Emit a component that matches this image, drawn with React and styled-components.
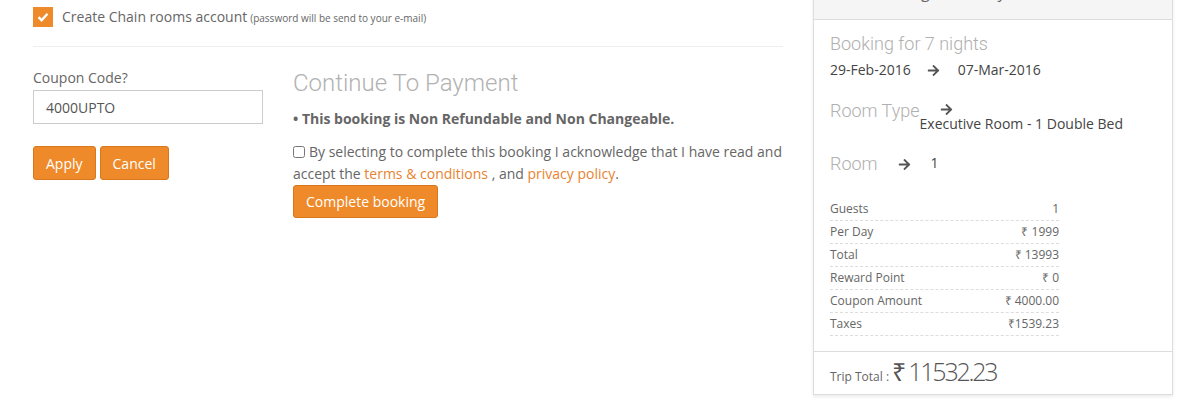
import React from 'react';
import styled, { createGlobalStyle } from 'styled-components';
import { FaArrowRight } from 'react-icons/fa';

const GlobalStyle = createGlobalStyle`
  body {
    margin: 0;
    font-family: "Open Sans", "Liberation Sans", sans-serif;
    color: #666;
    background: #fff;
    overflow: hidden;
  }
`;

const orange = '#ef8a2a';
const lightFont = '"Roboto Light", Roboto, "Liberation Sans", sans-serif';

const Page = styled.div`
  display: flex;
  align-items: flex-start;
  width: 1186px;
  height: 410px;
`;

const Main = styled.div`
  width: 750px;
  margin-left: 33px;
`;

const AccountRow = styled.label`
  display: flex;
  align-items: center;
  height: 20px;
  margin-top: 7px;
  font-size: 14px;
  line-height: 18px;
  color: #666;
`;

const OrangeBox = styled.span`
  display: inline-flex;
  align-items: center;
  justify-content: center;
  width: 20px;
  height: 20px;
  background: ${orange};
  margin-right: 9px;
`;

const Hint = styled.small`
  font-size: 10px;
  margin-left: 3px;
  margin-top: 2px;
`;

const Divider = styled.hr`
  border: 0;
  border-top: 1px solid #eee;
  margin: 19px 0 0;
`;

const FormRow = styled.div`
  display: flex;
  gap: 30px;
  margin-top: 20px;
`;

const CouponCol = styled.div`
  width: 230px;
`;

const FieldLabel = styled.div`
  font-size: 14px;
  line-height: 20px;
  margin-top: 1px;
  color: #666;
`;

const Input = styled.input`
  display: block;
  box-sizing: border-box;
  width: 230px;
  height: 34px;
  margin-top: 2px;
  padding: 0 12px;
  border: 1px solid #ccc;
  font-family: inherit;
  font-size: 14px;
  color: #555;
  outline: none;
`;

const ButtonRow = styled.div`
  display: flex;
  gap: 4px;
  margin-top: 22px;
`;

const Button = styled.button`
  height: ${(p) => p.$h || 34}px;
  padding: 0 12px;
  background: ${orange};
  border: 1px solid #d9771c;
  border-radius: 3px;
  color: #fff;
  font-family: inherit;
  font-size: 14px;
`;

const PayCol = styled.div`
  flex: 1;
`;

const Heading = styled.h2`
  margin: 1px 0 0;
  font-family: ${lightFont};
  font-weight: 300;
  font-size: 24px;
  line-height: 30px;
  color: #b2b2b2;
`;

const Notice = styled.p`
  margin: 11px 0 0;
  font-size: 14px;
  font-weight: 700;
  color: #666;
  line-height: 20px;
`;

const Terms = styled.p`
  margin: 12px 0 0;
  font-size: 14px;
  line-height: 22px;
  color: #666;

  input {
    margin: 0 4px 0 0;
    vertical-align: -1px;
    width: 12px;
    height: 12px;
  }

  a {
    color: #e8832f;
    text-decoration: none;
  }
`;

const Side = styled.aside`
  box-sizing: border-box;
  width: 360px;
  margin-left: 30px;
  margin-top: -22px;
  border: 1px solid #ddd;
  box-shadow: 0 2px 3px rgba(0, 0, 0, 0.08);
  background: #fff;
`;

const SideHeader = styled.div`
  height: 41px;
  box-sizing: border-box;
  padding: 2px 16px 0;
  background: #f5f5f5;
  border-bottom: 1px solid #ddd;
  font-size: 16px;
  line-height: 22px;
  color: #666;
`;

const SideBody = styled.div`
  padding: 12px 16px 15px;
`;

const Title = styled.div`
  font-family: ${lightFont};
  font-weight: 300;
  font-size: 18px;
  line-height: 24px;
  color: #b0b0b0;
`;

const DateRow = styled.div`
  display: flex;
  align-items: center;
  margin-top: 4px;
  font-size: 14px;
  line-height: 20px;
  color: #444;
`;

const Arrow = styled(FaArrowRight)`
  font-size: 13px;
  color: #555;
  margin: 0 ${(p) => p.$gap}px 0 ${(p) => p.$left}px;
`;

const InfoRow = styled.div`
  display: flex;
  align-items: ${(p) => p.$align || 'flex-start'};
  margin-top: ${(p) => p.$mt}px;
`;

const Stack = styled.div`
  display: flex;
  flex-direction: column;
  padding-top: 4px;
`;

const Value = styled.span`
  font-size: 14px;
  line-height: 20px;
  margin-top: -2px;
  color: #444;
`;

const Table = styled.div`
  width: 229px;
  margin-top: 22px;
`;

const Row = styled.div`
  display: flex;
  justify-content: space-between;
  height: 22px;
  line-height: 22px;
  border-bottom: 1px dashed #ddd;
  font-size: 12px;
  color: #666;
`;

const SideFooter = styled.div`
  display: flex;
  align-items: baseline;
  padding: 3px 16px 7px;
  border-top: 1px solid #ddd;
  font-size: 12px;
  color: #666;
`;

const Amount = styled.span`
  margin-left: 3px;
  font-size: 25px;
  font-weight: 300;
  letter-spacing: -2.2px;
  color: #555;
  line-height: 32px;
`;

const rows = [
  ['Guests', '1'],
  ['Per Day', '₹ 1999'],
  ['Total', '₹ 13993'],
  ['Reward Point', '₹ 0'],
  ['Coupon Amount', '₹ 4000.00'],
  ['Taxes', '₹1539.23'],
];

const App = () => (
  <>
    <GlobalStyle />
    <Page>
      <Main>
        <AccountRow>
          <OrangeBox>
            <svg width="12" height="10" viewBox="0 0 12 10">
              <path d="M1.5 5.2 L4.6 8.2 L10.5 1.8" stroke="#fff" strokeWidth="2.4" fill="none" />
            </svg>
          </OrangeBox>
          Create Chain rooms account
          <Hint>(password will be send to your e-mail)</Hint>
        </AccountRow>
        <Divider />
        <FormRow>
          <CouponCol>
            <FieldLabel>Coupon Code?</FieldLabel>
            <Input defaultValue="4000UPTO" />
            <ButtonRow>
              <Button>Apply</Button>
              <Button>Cancel</Button>
            </ButtonRow>
          </CouponCol>
          <PayCol>
            <Heading>Continue To Payment</Heading>
            <Notice>• This booking is Non Refundable and Non Changeable.</Notice>
            <Terms>
              <input type="checkbox" />
              By selecting to complete this booking I acknowledge that I have read and accept the{' '}
              <a href="#terms">terms &amp; conditions</a> , and <a href="#privacy">privacy policy</a>.
            </Terms>
            <Button $h={33}>Complete booking</Button>
          </PayCol>
        </FormRow>
      </Main>
      <Side>
        <SideHeader>Your Booking Summary</SideHeader>
        <SideBody>
          <Title>Booking for 7 nights</Title>
          <DateRow>
            29-Feb-2016
            <Arrow $left={16} $gap={18} />
            07-Mar-2016
          </DateRow>
          <InfoRow $mt={19}>
            <Title>Room Type</Title>
            <Stack>
              <Arrow $left={20} $gap={0} />
              <Value>Executive Room - 1 Double Bed</Value>
            </Stack>
          </InfoRow>
          <InfoRow $mt={18} $align="center">
            <Title>Room</Title>
            <Arrow $left={20} $gap={20} />
            <Value>1</Value>
          </InfoRow>
          <Table>
            {rows.map(([k, v]) => (
              <Row key={k}>
                <span>{k}</span>
                <span>{v}</span>
              </Row>
            ))}
          </Table>
        </SideBody>
        <SideFooter>
          Trip Total :<Amount>₹ 11532.23</Amount>
        </SideFooter>
      </Side>
    </Page>
  </>
);

export default App;
